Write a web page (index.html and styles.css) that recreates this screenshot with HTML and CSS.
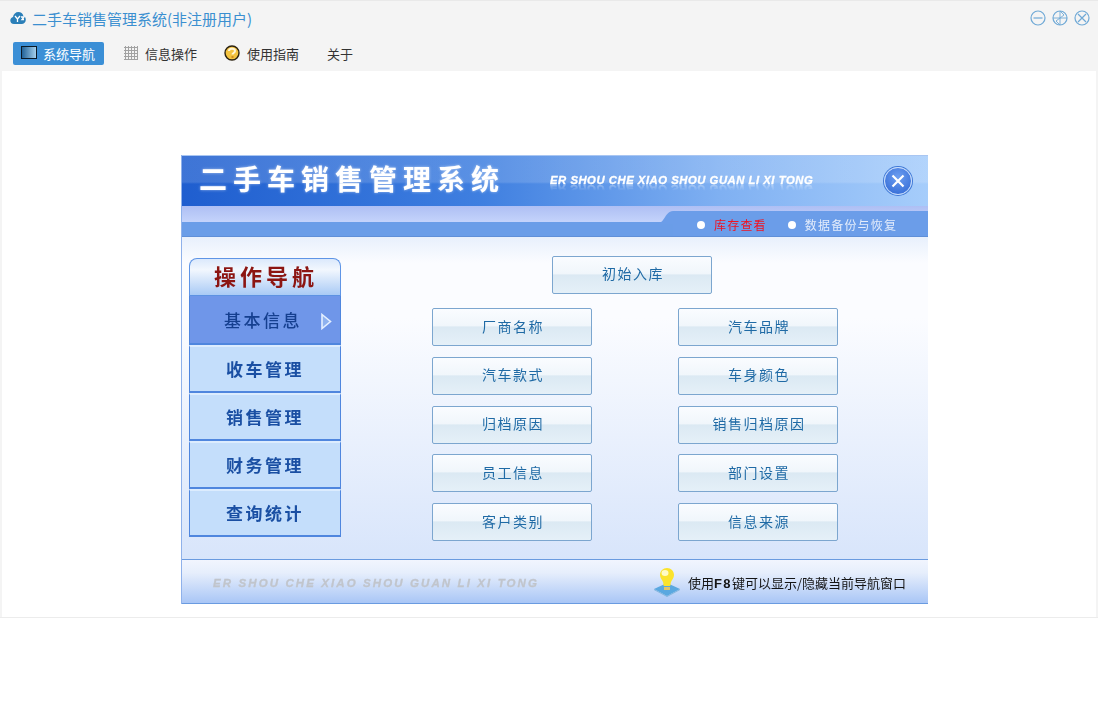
FILE: index.html
```html
<!DOCTYPE html>
<html lang="zh">
<head>
<meta charset="utf-8">
<title>二手车销售管理系统</title>
<link rel="stylesheet" href="styles.css">
</head>
<body>
<div class="window">
  <header class="titlebar">
    <svg class="logo" width="16" height="14" viewBox="0 0 16 14"><path d="M4 13C1.500 13 .3 11.200.3 9.400.3 7.600 1.500 6.300 3 6 3.400 3 5.700 1 8.400 1c2.500 0 4.400 1.600 5 4 1.500.4 2.400 2 2.400 3.700C15.800 11 14 13 11.600 13z" fill="#2b7fb8"/><path d="M5 5l2.500 3 2.500-3M7.500 8v3M11 6h3l-2 2.500h2" stroke="#fff" stroke-width="1.300" fill="none"/></svg>
    <span class="title">二手车销售管理系统(非注册用户)</span>
    <div class="winbtns">
      <svg width="16" height="16" viewBox="0 0 16 16"><circle cx="8" cy="8" r="7" class="wb"/><path d="M3.500 8h9" class="wb"/></svg>
      <svg width="16" height="16" viewBox="0 0 16 16"><circle cx="8" cy="8" r="7" class="wb"/><path d="M8 1v14M1 8h14M8 1l4 4-4 3M8 15l-4-4 4-3" class="wb thin"/></svg>
      <svg width="16" height="16" viewBox="0 0 16 16"><circle cx="8" cy="8" r="7" class="wb"/><path d="M4 4l8 8M12 4l-8 8" class="wb"/></svg>
    </div>
  </header>
  <nav class="menubar">
    <a class="menu active">
      <svg class="up" width="17" height="14" viewBox="0 0 17 14"><defs><linearGradient id="sc" x1="0" x2="1"><stop offset="0" stop-color="#1d5f95"/><stop offset="1" stop-color="#a9d3ee"/></linearGradient></defs><rect x=".5" y=".5" width="15" height="12" fill="url(#sc)" stroke="#0b1a26"/></svg>
      <span>系统导航</span>
    </a>
    <a class="menu grid-item">
      <svg class="up" width="14" height="14" viewBox="0 0 14 14"><path d="M1.500 0v14M4.500 0v14M7.500 0v14M10.500 0v14M13.500 0v14M0 1.500h14M0 4.500h14M0 7.500h14M0 10.500h14M0 13.500h14" stroke="#a2a2a2" fill="none"/></svg>
      <span>信息操作</span>
    </a>
    <a class="menu guide-item">
      <svg class="up" width="16" height="16" viewBox="0 0 16 16"><circle cx="8" cy="8" r="7" fill="#f4c33f" stroke="#2a2110" stroke-width="1.400"/><path d="M5 6c0-3 6-3 6 0 0 2-2.500 2-2.500 3.500" stroke="#fff6d8" stroke-width="2" fill="none"/><path d="M7.500 12h2" stroke="#c77f16" stroke-width="1.500"/></svg>
      <span>使用指南</span>
    </a>
    <a class="menu about-item"><span>关于</span></a>
  </nav>
  <main class="content">
    <section class="panel">
      <div class="banner">
        <h1 class="sys-name">二手车销售管理系统</h1>
        <span class="pinyin">ER SHOU CHE XIAO SHOU GUAN LI XI TONG</span>
        <span class="close-ball">
          <svg width="16" height="16" viewBox="0 0 16 16"><path d="M2.500 2.500l11 11M13.500 2.500l-11 11" stroke="#fff" stroke-width="2.200" fill="none"/></svg>
        </span>
      </div>
      <div class="band">
        <div class="tabs">
          <svg class="curve" width="17" height="13" viewBox="0 0 17 13"><path d="M0 13C9 13 8 1 17 0V13z" fill="#6b9de9"/></svg>
          <span class="tab red">库存查看</span>
          <span class="tab">数据备份与恢复</span>
        </div>
      </div>
      <div class="body">
        <aside class="side">
          <div class="side-head">操作导航</div>
          <div class="side-item on">基本信息<svg class="arrow" width="11" height="17" viewBox="0 0 11 17"><path d="M1 1.500l8.500 7-8.500 7z" fill="#8fb2ef" stroke="#e4efff" stroke-width="1.600"/></svg></div>
          <div class="side-item">收车管理</div>
          <div class="side-item">销售管理</div>
          <div class="side-item">财务管理</div>
          <div class="side-item">查询统计</div>
        </aside>
        <div class="actions">
          <button class="btn first">初始入库</button>
          <div class="btn-grid">
            <button class="btn">厂商名称</button>
            <button class="btn">汽车品牌</button>
            <button class="btn">汽车款式</button>
            <button class="btn">车身颜色</button>
            <button class="btn">归档原因</button>
            <button class="btn">销售归档原因</button>
            <button class="btn">员工信息</button>
            <button class="btn">部门设置</button>
            <button class="btn">客户类别</button>
            <button class="btn">信息来源</button>
          </div>
        </div>
      </div>
      <footer class="foot">
        <span class="foot-pinyin">ER SHOU CHE XIAO SHOU GUAN LI XI TONG</span>
        <div class="hint">
          <svg width="28" height="30" viewBox="0 0 28 30"><path d="M1 22l13-6 13 6-13 7z" fill="#5aa8e0"/><path d="M14 29l13-7v1l-13 7-13-7v-1z" fill="#7fb4dc"/><path d="M14 1c4 0 7 3 7 7 0 3-2 4.500-3 7-.4 1.400-.5 3-.8 4h-6.400c-.3-1-.4-2.600-.8-4-1-2.500-3-4-3-7 0-4 3-7 7-7z" fill="#fbe32c"/><ellipse cx="12" cy="6" rx="3.500" ry="3" fill="#fffbc4"/><path d="M11 20h6v3h-6z" fill="#e0c66a"/></svg>
          <span class="hint-text">使用<b>F8</b>键可以显示/隐藏当前导航窗口</span>
        </div>
      </footer>
    </section>
  </main>
</div>
</body>
</html>
```
FILE: styles.css
```css
* { box-sizing: border-box; }
html, body { margin: 0; padding: 0; background: #fff; }
body { font-family: "Noto Sans CJK SC", "Liberation Sans", sans-serif; width: 1098px; height: 719px; overflow: hidden; }

.window { height: 618px; background: #f4f4f4; border-bottom: 1px solid #ececec; display: flex; flex-direction: column; }

.titlebar { height: 38px; display: flex; align-items: center; padding: 0 8px 3px 10px; border-top: 1px solid #e9e9e9; }
.logo { flex: none; }
.title { margin-left: 6px; font-size: 15px; color: #3b8fd0; }
.winbtns { margin-left: auto; display: flex; gap: 6px; margin-top: -1px; }
.wb { fill: none; stroke: #6fa9d6; stroke-width: 1.200; }
.wb.thin { stroke-width: .9; }

.menubar { height: 33px; display: flex; align-items: flex-start; padding: 4px 0 0 13px; }
.menu { height: 23px; display: flex; align-items: center; font-size: 13px; color: #333; }
.menu svg { flex: none; }
.menu svg.up { margin-top: -2px; }
.menu.active { width: 91px; background: #3b8fd6; color: #fff; border-radius: 2px; padding-left: 8px; gap: 5px; margin-right: 20px; }
.grid-item { gap: 7px; margin-right: 27px; }
.guide-item { gap: 7px; margin-right: 28px; }

.content { flex: 1; background: #fff; margin: 0 2px; padding: 84px 0 0 179px; }

.panel { width: 747px; height: 449px; display: flex; flex-direction: column; border-left: 1px solid #8fb1ea; filter: blur(.3px); }

.banner { height: 51px; display: flex; align-items: center; padding-left: 17px; background: linear-gradient(180deg, rgba(255,255,255,.14) 0, rgba(255,255,255,.14) 52%, rgba(255,255,255,0) 56%), linear-gradient(90deg, #1f5ecf 0, #3f7fe0 40%, #7fb0f2 72%, #a6cdfb 100%); border-top: 1px solid #a9c6f2; }
.sys-name { margin: 0 0 7px; font-size: 28px; line-height: 34px; font-weight: 700; color: #fff; letter-spacing: 6px; white-space: nowrap; width: 351px; text-shadow: 0 0 3px rgba(255,255,255,.55); }
.pinyin { font-family: "Liberation Sans", sans-serif; font-size: 11.300px; font-weight: 700; font-style: italic; letter-spacing: .52px; -webkit-text-stroke: .3px #fff; color: #fff; white-space: nowrap; margin-top: -2px; -webkit-box-reflect: below -3px linear-gradient(transparent 35%, rgba(255,255,255,.45)); }
.close-ball { margin-left: auto; margin-right: 16px; width: 28px; height: 28px; border-radius: 50%; display: flex; align-items: center; justify-content: center; background: radial-gradient(circle at 50% 35%, #6d9ef0 0, #2d66d3 100%); border: 1.500px solid #c8dcfb; box-shadow: 0 0 0 1px #3f78d6; }

.band { height: 31px; display: flex; justify-content: flex-end; align-items: flex-end; background: linear-gradient(180deg, #aebff4 0, #c4d3fb 53%, #6a9de8 55%, #6a9de8 100%); border-bottom: 1px solid #5f8fd8; }
.tabs { position: relative; width: 255px; height: 25px; display: flex; align-items: center; gap: 21px; padding: 2px 0 0 24px; background: #6b9de9; }
.curve { position: absolute; left: -17px; top: 0; }
.tab { display: flex; align-items: center; gap: 9px; font-size: 12px; letter-spacing: 1.200px; color: #e3ecfb; white-space: nowrap; }
.tab::before { content: ""; width: 8px; height: 8px; border-radius: 50%; background: #fff; }
.tab.red { color: #f01320; }

.body { height: 322px; display: flex; background: linear-gradient(180deg, #e8f0fc 0, #fbfcff 8%, #fbfcff 25%, #d8e5fb 100%); padding: 21px 0 0 7px; }

.side { width: 152px; flex: none; align-self: flex-start; }
.side-head { height: 38px; display: flex; align-items: center; justify-content: center; padding: 0 0 5px 2px; font-size: 22px; font-weight: 700; letter-spacing: 4px; color: #8c1512; border: 1px solid #5f95e6; border-bottom-color: #5d92e2; border-radius: 8px 8px 0 0; background: linear-gradient(180deg, #dbe9fc 0, #f2f7fe 30%, #a9caf5 100%); }
.side-item { height: 48px; position: relative; display: flex; align-items: center; justify-content: center; padding-bottom: 3px; font-size: 17px; font-weight: 700; letter-spacing: 2.500px; color: #1a4fa3; background: #c4defb; border: 1px solid #4f86de; border-top: 2px solid #dcecfe; box-shadow: inset 0 -1px 0 #4f86de; }
.side-item.on { height: 49px; background: #6f96e9; font-weight: 500; color: #153f8f; border-top: 0; padding-right: 4px; padding-bottom: 2px; }
.arrow { position: absolute; right: 8px; top: 17px; }

.actions { flex: none; display: flex; flex-direction: column; margin-left: 91px; margin-top: -2px; }
.btn { height: 38px; width: 160px; padding: 0 0 3px 2px; font-family: inherit; font-size: 14px; letter-spacing: 1.500px; color: #1f6aa5; border: 1px solid #7ca6cf; border-radius: 2px; background: linear-gradient(180deg, #fafcff 0, #f0f6fb 48%, #dbe9f3 49%, #e5f0f8 100%); }
.btn.first { margin-left: 120px; margin-bottom: 14px; padding-bottom: 4px; }
.btn-grid { display: grid; grid-template-columns: 160px 160px; column-gap: 86px; row-gap: 10.750px; }

.foot { height: 45px; flex: none; display: flex; align-items: center; padding-left: 31px; background: linear-gradient(180deg, #f1f5fe 0, #e6eefc 30%, #a9c6f6 100%); border-top: 1px solid #6a9be0; border-bottom: 1px solid #6a9be0; }
.foot-pinyin { font-family: "Liberation Sans", sans-serif; font-size: 11.500px; font-weight: 700; font-style: italic; letter-spacing: 2.100px; -webkit-text-stroke: .3px #c1c5cc; color: #c1c5cc; white-space: nowrap; padding-top: 2px; }
.hint { margin-left: auto; display: flex; align-items: center; gap: 7px; }
.hint-text { font-size: 13px; color: #151515; white-space: nowrap; margin-right: 22px; padding-top: 2px; }
.hint-text b { font-family: "Liberation Sans", sans-serif; letter-spacing: 1.300px; }
```
